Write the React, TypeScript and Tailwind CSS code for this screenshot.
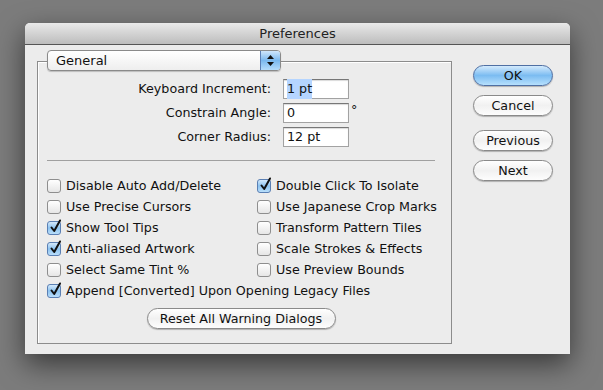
import React from 'react'

const font = { fontFamily: '"DejaVu Sans", "Liberation Sans", sans-serif' }

function Check({ checked }: { checked?: boolean }) {
  return (
    <span
      className={
        'relative inline-block w-[14px] h-[14px] shrink-0 rounded-[3px] border ' +
        (checked
          ? 'border-[#5a7fb3] bg-gradient-to-b from-[#d4e9fb] via-[#8cc3f0] to-[#b9defa]'
          : 'border-[#8e8e8e] bg-gradient-to-b from-[#ffffff] to-[#e6e6e6]')
      }
    >
      {checked && (
        <svg className="absolute left-[1px] top-[-3px]" width="13" height="15" viewBox="0 0 13 15">
          <path d="M2.5 8.5 L5.2 12 L11 1.5" fill="none" stroke="#111" strokeWidth="2" strokeLinecap="round" strokeLinejoin="round" />
        </svg>
      )}
    </span>
  )
}

function Row({ label, checked, w }: { label: string; checked?: boolean; w?: string }) {
  return (
    <div className={'flex shrink-0 items-center h-[21px] gap-[5px] ' + (w ?? 'w-[210px]')}>
      <Check checked={checked} />
      <span className="whitespace-nowrap">{label}</span>
    </div>
  )
}

function AquaButton({ label, primary, w }: { label: string; primary?: boolean; w: string }) {
  return (
    <div
      className={
        'flex items-center justify-center h-[21px] rounded-full border shadow-[0_1px_1px_rgba(0,0,0,0.25)] ' +
        w +
        (primary
          ? ' border-[#4f6fa3] bg-gradient-to-b from-[#d3eafc] via-[#7bbcf1] to-[#b6e0fd]'
          : ' border-[#8a8a8a] bg-gradient-to-b from-[#ffffff] via-[#f1f1f1] to-[#fdfdfd]')
      }
    >
      <span className="text-[#111]">{label}</span>
    </div>
  )
}

function Field({ value, selected }: { value: string; selected?: boolean }) {
  return (
    <div className="w-[66px] h-[20px] bg-white border border-[#a2a2a2] border-t-[#777] flex items-center px-[3px] shadow-[inset_0_1px_1px_rgba(0,0,0,0.15)]">
      <span className={selected ? 'bg-[#b5d5ff]' : ''}>{value}</span>
    </div>
  )
}

export default function App() {
  return (
    <div className="w-[603px] h-[390px] overflow-hidden bg-[#7c7c7c] pl-[25px] pt-[23px]" style={font}>
      <div className="w-[545px] h-[331px] flex flex-col bg-[#ececec] rounded-t-[5px] shadow-[0_10px_28px_rgba(0,0,0,0.55)] text-[12.7px] text-[#111]">
        {/* title bar */}
        <div className="h-[22px] shrink-0 flex items-center justify-center rounded-t-[5px] bg-gradient-to-b from-[#e9e9e9] to-[#bdbdbd] border-b border-[#555]">
          <span className="text-[13px] text-[#222]">Preferences</span>
        </div>

        <div className="flex pl-[12px] pt-[16px]">
          {/* group box */}
          <div className="w-[415px] h-[283px] border border-[#8c8c8c] shadow-[inset_1px_1px_0_#fff] pl-[9px] pr-[16px] flex flex-col">
            {/* popup */}
            <div className="-mt-[12px] w-[234px] h-[21px] flex rounded-[4px] border border-[#8a8a8a] bg-gradient-to-b from-[#ffffff] to-[#eeeeee] shadow-[0_1px_1px_rgba(0,0,0,0.2)] overflow-hidden">
              <span className="flex-1 pl-[8px] flex items-center text-[13px]">General</span>
              <div className="w-[20px] border-l border-[#5b7fb5] bg-gradient-to-b from-[#cfe6fb] via-[#7ab8ee] to-[#b4dcfb] flex flex-col items-center justify-center gap-[3px]">
                <svg width="7" height="4" viewBox="0 0 7 4"><path d="M3.5 0 L7 4 L0 4 Z" fill="#111" /></svg>
                <svg width="7" height="4" viewBox="0 0 7 4"><path d="M0 0 L7 0 L3.5 4 Z" fill="#111" /></svg>
              </div>
            </div>

            {/* fields */}
            <div className="mt-[8px] flex flex-col gap-[4px]">
              <div className="flex items-center h-[20px] gap-[12px]">
                <span className="w-[224px] text-right">Keyboard Increment:</span>
                <Field value="1 pt" selected />
              </div>
              <div className="flex items-center h-[20px] gap-[12px]">
                <span className="w-[224px] text-right">Constrain Angle:</span>
                <Field value="0" />
                <span className="-ml-[10px] -mt-[6px]">°</span>
              </div>
              <div className="flex items-center h-[20px] gap-[12px]">
                <span className="w-[224px] text-right">Corner Radius:</span>
                <Field value="12 pt" />
              </div>
            </div>

            <div className="mt-[13px] h-px bg-[#a0a0a0]" />

            {/* checkboxes */}
            <div className="mt-[14px] flex flex-col">
              <div className="flex">
                <Row label="Disable Auto Add/Delete" />
                <Row label="Double Click To Isolate" checked />
              </div>
              <div className="flex">
                <Row label="Use Precise Cursors" />
                <Row label="Use Japanese Crop Marks" />
              </div>
              <div className="flex">
                <Row label="Show Tool Tips" checked />
                <Row label="Transform Pattern Tiles" />
              </div>
              <div className="flex">
                <Row label="Anti-aliased Artwork" checked />
                <Row label="Scale Strokes & Effects" />
              </div>
              <div className="flex">
                <Row label="Select Same Tint %" />
                <Row label="Use Preview Bounds" />
              </div>
              <Row label="Append [Converted] Upon Opening Legacy Files" checked w="w-full" />
            </div>

            <div className="mt-[7px] flex justify-center">
              <AquaButton label="Reset All Warning Dialogs" w="w-[189px]" />
            </div>
          </div>

          {/* buttons */}
          <div className="ml-[21px] pt-[4px] flex flex-col">
            <AquaButton label="OK" primary w="w-[80px]" />
            <div className="mt-[9px]"><AquaButton label="Cancel" w="w-[80px]" /></div>
            <div className="mt-[14px]"><AquaButton label="Previous" w="w-[80px]" /></div>
            <div className="mt-[9px]"><AquaButton label="Next" w="w-[80px]" /></div>
          </div>
        </div>
      </div>
    </div>
  )
}
